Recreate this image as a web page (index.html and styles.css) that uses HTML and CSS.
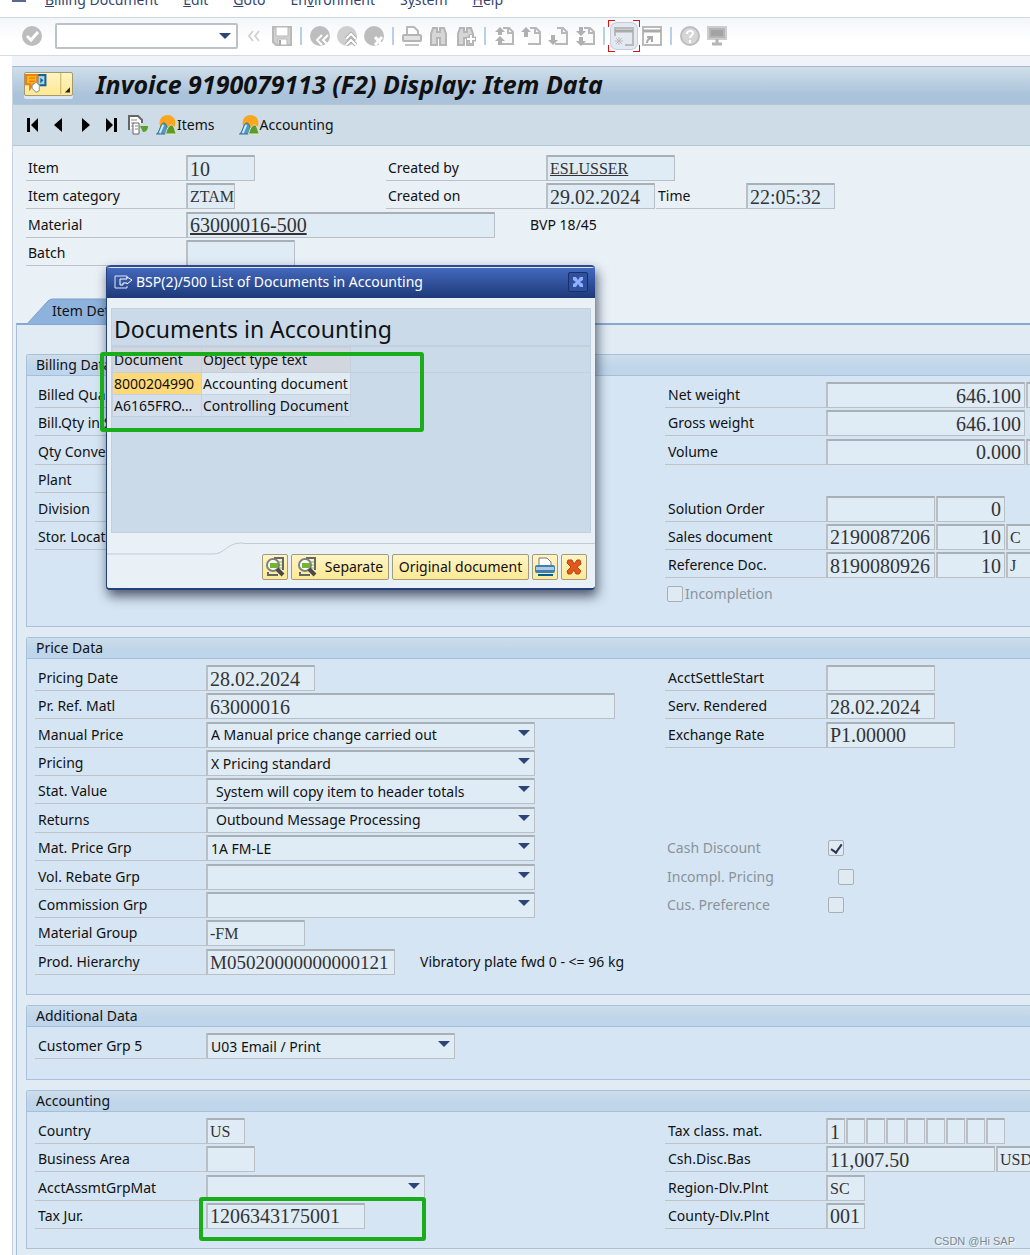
FILE: index.html
```html
<!DOCTYPE html>
<html lang="en">
<head>
    <meta charset="UTF-8">
    <meta name="viewport" content="width=device-width, initial-scale=1.0">
    <title>Invoice 9190079113 (F2) Display: Item Data</title>
    <link rel="stylesheet" href="styles.css">
</head>
<body>
    <!-- Shared icon shapes -->
    <svg class="defs" aria-hidden="true">
        <symbol id="hills" viewBox="0 0 20 20">
            <circle cx="11" cy="8" r="8" fill="#fba61c"/>
            <path d="M0 19c3-1 4-11 7-11s2 2 4 5l-2 6z" fill="#4d9bc4" stroke="#3c6f94"/>
            <path d="M3 18c2-2 2-6 4-8" stroke="#cfe9f5" stroke-width="2" fill="none"/>
            <path d="M9 19c1-4 3-9 6-9s3 6 5 9z" fill="#5d9a2c" stroke="#e8e8c0"/>
        </symbol>
        <symbol id="binoculars" viewBox="0 0 20 20">
            <path d="M2 19V8l2-6h4v4h3V2h4l2 6v11h-6v-7H8v7z" fill="#d6d6d6" stroke="#b5b5b5" stroke-width="2"/>
        </symbol>
        <symbol id="page" viewBox="0 0 20 20">
            <path d="M9 2h6l4 4v12H7" fill="#fafafa" stroke="#b8b8b8" stroke-width="2"/>
            <path d="M14 2v5h5" fill="none" stroke="#b8b8b8" stroke-width="2"/>
        </symbol>
        <symbol id="details" viewBox="0 0 20 20">
            <path d="M9 1h9v12M3 15v3h10" fill="none" stroke="#666" stroke-width="2"/>
            <path d="M12 4h5v9h-5z" fill="#fbfbef"/>
            <path d="M14 5h3M14 8h3M14 11h3" stroke="#7bb545"/>
            <circle cx="8" cy="8" r="6" fill="#fff" stroke="#808080" stroke-width="2"/>
            <path d="M5 6h8v5H5z" fill="#72b82c"/>
            <path d="M12 12l6 6" stroke="#4a4a4a" stroke-width="4"/>
        </symbol>
    </svg>

    <nav class="menu-bar">
        <span class="menu-icon"></span>
        <a href="#"><u>B</u>illing Document</a>
        <a href="#"><u>E</u>dit</a>
        <a href="#"><u>G</u>oto</a>
        <a href="#">En<u>v</u>ironment</a>
        <a href="#">S<u>y</u>stem</a>
        <a href="#"><u>H</u>elp</a>
    </nav>

    <div class="toolbar">
        <button class="tool" aria-label="Enter"><svg viewBox="0 0 20 20"><circle cx="10" cy="10" r="10" fill="#bdbdbd"/><path d="M5 10l4 4 7-8" fill="none" stroke="#fff" stroke-width="3"/></svg></button>
        <div class="command">
            <select aria-label="Command"><option></option></select>
        </div>
        <button class="tool collapse" aria-label="Hide command field"><svg viewBox="0 0 13 20"><path d="M6 5l-4 5 4 5M12 5l-4 5 4 5" fill="none" stroke="#d2d2d2" stroke-width="2"/></svg></button>
        <button class="tool save" aria-label="Save"><svg viewBox="0 0 20 20"><path d="M1 1h18v18H4l-3-3z" fill="#d0d0d0" stroke="#b9b9b9" stroke-width="2"/><path d="M4 1h12v9H4zM6 13h9v6H6z" fill="#fff" stroke="#b9b9b9"/><path d="M8 14v5" stroke="#aaa" stroke-width="2"/></svg></button>
        <span class="divider"></span>
        <button class="tool" aria-label="Back"><svg viewBox="0 0 20 20"><circle cx="10" cy="10" r="10" fill="#bdbdbd"/><path d="M12 9l-5 5 5 5M18 9l-5 5 5 5" fill="none" stroke="#fff" stroke-width="2"/></svg></button>
        <button class="tool" aria-label="Exit"><svg viewBox="0 0 20 20"><circle cx="10" cy="10" r="10" fill="#cfcfcf"/><path d="M9 13l5-5 5 5M9 19l5-5 5 5" fill="none" stroke="#aaa" stroke-width="4"/><path d="M9 13l5-5 5 5M9 19l5-5 5 5" fill="none" stroke="#fff" stroke-width="2"/></svg></button>
        <button class="tool" aria-label="Cancel"><svg viewBox="0 0 20 20"><circle cx="10" cy="10" r="10" fill="#bdbdbd"/><path d="M11 11l7 8M18 11l-7 8" stroke="#fff" stroke-width="3"/></svg></button>
        <span class="divider"></span>
        <button class="tool" aria-label="Print"><svg viewBox="0 0 20 20"><path d="M5 9V1h7l4 4v4" fill="#fff" stroke="#b9b9b9" stroke-width="2"/><rect x="1" y="9" width="18" height="6" rx="1" fill="#e2e2e2" stroke="#b5b5b5" stroke-width="2"/><path d="M3 19h14" stroke="#c2c2c2" stroke-width="2"/></svg></button>
        <button class="tool" aria-label="Find"><svg><use href="#binoculars"/></svg></button>
        <button class="tool" aria-label="Find next"><svg viewBox="0 0 20 20"><use href="#binoculars"/><path d="M15 8v10M10 13h10" stroke="#b5b5b5" stroke-width="5"/><path d="M15 9v8M11 13h8" stroke="#fff" stroke-width="2"/></svg></button>
        <span class="divider"></span>
        <button class="tool" aria-label="First page"><svg viewBox="0 0 20 20"><use href="#page"/><path d="M1 6l5-5 5 5H8v3H4V6zM1 15l5-5 5 5H8v4H4v-4z" fill="#b0b0b0"/></svg></button>
        <button class="tool" aria-label="Previous page"><svg viewBox="0 0 20 20"><use href="#page"/><path d="M0 6l5-5 5 5H7v5H3V6z" fill="#b0b0b0"/></svg></button>
        <button class="tool" aria-label="Next page"><svg viewBox="0 0 20 20"><use href="#page"/><path d="M0 14l5 5 5-5H7V9H3v5z" fill="#b0b0b0"/></svg></button>
        <button class="tool" aria-label="Last page"><svg viewBox="0 0 20 20"><use href="#page"/><path d="M1 5l5 5 5-5H8V1H4v4zM1 15l5 5 5-5H8v-4H4v4z" fill="#b0b0b0"/></svg></button>
        <span class="divider"></span>
        <button class="tool marked" aria-label="New session"><svg viewBox="0 0 20 20"><path d="M1 10V2h18v17H11" fill="none" stroke="#bababa" stroke-width="2"/><path d="M1 5h18" stroke="#aaa" stroke-width="3"/><path d="M5 11v8M1 15h8M2 12l6 6M8 12l-6 6" stroke="#bbb"/></svg></button>
        <button class="tool" aria-label="Shortcut"><svg viewBox="0 0 20 20"><rect x="1" y="1" width="18" height="18" fill="#fff" stroke="#bababa" stroke-width="2"/><path d="M1 5h18" stroke="#aaa" stroke-width="3"/><path d="M5 17c0-3 1-4 4-5M5 11h5v5" fill="none" stroke="#aaa" stroke-width="2"/></svg></button>
        <span class="divider"></span>
        <button class="tool" aria-label="Help"><svg viewBox="0 0 20 20"><circle cx="10" cy="10" r="9" fill="#d6d6d6" stroke="#bdbdbd" stroke-width="2"/><path d="M7 8c0-4 6-4 6-1 0 2-3 3-3 5M10 14v3" fill="none" stroke="#fff" stroke-width="2"/></svg></button>
        <button class="tool" aria-label="Layout"><svg viewBox="0 0 20 20"><rect x="1" y="1" width="18" height="12" fill="#b5b5b5" stroke="#cdcdcd" stroke-width="2"/><path d="M4 4h12v6H4z" fill="#a3a3a3"/><path d="M10 13v4M5 18h10" stroke="#b5b5b5" stroke-width="3"/></svg></button>
    </div>

    <main class="window">
        <header class="title-bar">
            <button class="services" aria-label="Services for object">
                <svg viewBox="0 0 46 21">
                    <rect x="12" y="2" width="8" height="10" fill="#a8d3ea" stroke="#156394" stroke-width="2"/>
                    <path d="M15 5l3 2-3 3z" fill="#156394"/>
                    <path d="M1 2h11v9H8l-3 4v-4H1z" fill="#fdb913" stroke="#ea7f1b" stroke-width="2"/>
                    <path d="M4 5h6M4 8h6" stroke="#e8641b"/>
                    <path d="M7 12l4-3 3 3v5l-3 2-4-4z" fill="#fff" stroke="#999"/>
                    <path d="M35 0v21" stroke="#c2b36e"/>
                    <path d="M44 14v5h-5z" fill="#222"/>
                </svg>
            </button>
            <h1>Invoice 9190079113 (F2) Display: Item Data</h1>
        </header>

        <div class="app-bar">
            <button aria-label="First item"><svg width="12" height="16" viewBox="0 0 12 16"><path d="M0 1h3v14H0zM11 1v14L4 8z"/></svg></button>
            <button class="prev" aria-label="Previous item"><svg width="8" height="16" viewBox="0 0 8 16"><path d="M8 1v14L0 8z"/></svg></button>
            <button class="next" aria-label="Next item"><svg width="8" height="16" viewBox="0 0 8 16"><path d="M0 1v14l8-7z"/></svg></button>
            <button class="last" aria-label="Last item"><svg width="12" height="16" viewBox="0 0 12 16"><path d="M9 1h3v14H9zM1 1v14l7-7z"/></svg></button>
            <button class="copy" aria-label="Display document"><svg width="20" height="20" viewBox="0 0 20 20"><path d="M1 15V1h9l4 4v3" fill="#fff" stroke="#666" stroke-width="2"/><path d="M3 5h6M3 8h3M3 11h2" stroke="#888"/><path d="M12 11h8c0 5-3 6-5 6z" fill="#55a32b"/><path d="M5 8h6v11H5z" fill="#fff" stroke="#666"/><path d="M7 11h3M7 14h3" stroke="#888"/></svg></button>
            <button class="with-text"><svg width="21" height="20" preserveAspectRatio="none"><use href="#hills"/></svg>Items</button>
            <button class="with-text accounting"><svg width="21" height="20"><use href="#hills"/></svg>Accounting</button>
        </div>

        <section class="item-head">
            <div class="row">
                <label for="item">Item</label>
                <div class="cell"><input class="w69" id="item" value="10" readonly></div>
                <label for="createdBy">Created by</label>
                <input class="w129 caps link" id="createdBy" value="ESLUSSER" readonly>
            </div>
            <div class="row">
                <label for="category">Item category</label>
                <div class="cell"><input class="w49 caps" id="category" value="ZTAM" readonly></div>
                <label for="createdOn">Created on</label>
                <input class="w109" id="createdOn" value="29.02.2024" readonly>
                <label class="time" for="time">Time</label>
                <input class="w89" id="time" value="22:05:32" readonly>
            </div>
            <div class="row">
                <label for="material">Material</label>
                <input class="w309 link" id="material" value="63000016-500" readonly>
                <span class="note">BVP 18/45</span>
            </div>
            <div class="row">
                <label for="batch">Batch</label>
                <input class="w109" id="batch" readonly>
            </div>
        </section>

        <div class="tabs">
            <button class="tab"><svg viewBox="0 0 120 27" width="120" height="27"><path d="M0 26L21 3q2-2 5-2h94v26H0z" fill="#8db2dc" stroke="#7b9fcb"/></svg><span>Item Detail</span></button>
        </div>

        <div class="panel">
            <section class="group">
                <h2>Billing Data</h2>
                <div class="columns">
                    <div class="rows rows-8">
                        <div class="row"><label for="billedQty">Billed Quantity</label><input class="w189" id="billedQty" readonly></div>
                        <div class="row"><label for="billQty">Bill.Qty in SKU</label><input class="w189" id="billQty" readonly></div>
                        <div class="row"><label for="qtyConv">Qty Conversion</label><input class="w189" id="qtyConv" readonly></div>
                        <div class="row"><label for="plant">Plant</label><input class="w49" id="plant" readonly></div>
                        <div class="row"><label for="division">Division</label><input class="w49" id="division" readonly></div>
                        <div class="row"><label for="storLoc">Stor. Location</label><input class="w49" id="storLoc" readonly></div>
                    </div>
                    <div class="rows rows-8 side">
                        <div class="row"><label for="net">Net weight</label><input class="w199 right" id="net" value="646.100" readonly><input class="w49" aria-label="Net weight unit" readonly></div>
                        <div class="row"><label for="gross">Gross weight</label><input class="w199 right" id="gross" value="646.100" readonly></div>
                        <div class="row"><label for="volume">Volume</label><input class="w199 right" id="volume" value="0.000" readonly><input class="w49" aria-label="Volume unit" readonly></div>
                        <div class="row"></div>
                        <div class="row"><label for="solution">Solution Order</label><input class="w109" id="solution" readonly><input class="w69 right" aria-label="Solution item" value="0" readonly></div>
                        <div class="row"><label for="sales">Sales document</label><input class="w109" id="sales" value="2190087206" readonly><input class="w69 right" aria-label="Sales item" value="10" readonly><input class="w49 caps" aria-label="Sales category" value="C" readonly></div>
                        <div class="row"><label for="refDoc">Reference Doc.</label><input class="w109" id="refDoc" value="8190080926" readonly><input class="w69 right" aria-label="Reference item" value="10" readonly><input class="w49 caps" aria-label="Reference category" value="J" readonly></div>
                        <div class="row check-row"><input type="checkbox" id="incompletion" disabled><label for="incompletion">Incompletion</label></div>
                    </div>
                </div>
            </section>

            <section class="group">
                <h2>Price Data</h2>
                <div class="columns">
                    <div class="rows rows-11">
                        <div class="row"><label for="priceDate">Pricing Date</label><input class="w109" id="priceDate" value="28.02.2024" readonly></div>
                        <div class="row"><label for="refMatl">Pr. Ref. Matl</label><input class="w409" id="refMatl" value="63000016" readonly></div>
                        <div class="row"><label for="manual">Manual Price</label><div class="select w329"><select id="manual"><option>A Manual price change carried out</option></select></div></div>
                        <div class="row"><label for="pricing">Pricing</label><div class="select w329"><select id="pricing"><option>X Pricing standard</option></select></div></div>
                        <div class="row"><label for="stat">Stat. Value</label><div class="select w329 blank-key"><select id="stat"><option>System will copy item to header totals</option></select></div></div>
                        <div class="row"><label for="returns">Returns</label><div class="select w329 blank-key"><select id="returns"><option>Outbound Message Processing</option></select></div></div>
                        <div class="row"><label for="matGrp">Mat. Price Grp</label><div class="select w329"><select id="matGrp"><option>1A FM-LE</option></select></div></div>
                        <div class="row"><label for="rebate">Vol. Rebate Grp</label><div class="select w329"><select id="rebate"><option></option></select></div></div>
                        <div class="row"><label for="commission">Commission Grp</label><div class="select w329"><select id="commission"><option></option></select></div></div>
                        <div class="row"><label for="matGroup">Material Group</label><input class="w99 caps" id="matGroup" value="-FM" readonly></div>
                        <div class="row"><label for="hierarchy">Prod. Hierarchy</label><input class="w189 long" id="hierarchy" value="M05020000000000121" readonly><span class="hint">Vibratory plate fwd 0 - &lt;= 96 kg</span></div>
                    </div>
                    <div class="rows rows-11 side">
                        <div class="row"><label for="settle">AcctSettleStart</label><input class="w109" id="settle" readonly></div>
                        <div class="row"><label for="rendered">Serv. Rendered</label><input class="w109" id="rendered" value="28.02.2024" readonly></div>
                        <div class="row"><label for="rate">Exchange Rate</label><input class="w129" id="rate" value="P1.00000" readonly></div>
                        <div class="row"></div>
                        <div class="row"></div>
                        <div class="row"></div>
                        <div class="row flag-row"><label for="cash">Cash Discount</label><input type="checkbox" id="cash" checked disabled></div>
                        <div class="row flag-row indent"><label for="incompl">Incompl. Pricing</label><input type="checkbox" id="incompl" disabled></div>
                        <div class="row flag-row"><label for="cus">Cus. Preference</label><input type="checkbox" id="cus" disabled></div>
                    </div>
                </div>
            </section>

            <section class="group">
                <h2>Additional Data</h2>
                <div class="rows">
                    <div class="row"><label for="grp5">Customer Grp 5</label><div class="select w249"><select id="grp5"><option>U03 Email / Print</option></select></div></div>
                </div>
            </section>

            <section class="group">
                <h2>Accounting</h2>
                <div class="columns">
                    <div class="rows rows-4">
                        <div class="row"><label for="country">Country</label><input class="w39 caps" id="country" value="US" readonly></div>
                        <div class="row"><label for="area">Business Area</label><input class="w49" id="area" readonly></div>
                        <div class="row"><label for="assmt">AcctAssmtGrpMat</label><div class="select w219"><select id="assmt"><option></option></select></div></div>
                        <div class="row"><label for="taxJur">Tax Jur.</label><div class="marked-field"><input class="w159" id="taxJur" value="1206343175001" readonly><span class="marker marker-field"></span></div></div>
                    </div>
                    <div class="rows rows-4 side">
                        <div class="row"><label for="tax1">Tax class. mat.</label><input class="w19" id="tax1" value="1" readonly><input class="w19" aria-label="Tax class 2" readonly><input class="w19" aria-label="Tax class 3" readonly><input class="w19" aria-label="Tax class 4" readonly><input class="w19" aria-label="Tax class 5" readonly><input class="w19" aria-label="Tax class 6" readonly><input class="w19" aria-label="Tax class 7" readonly><input class="w19" aria-label="Tax class 8" readonly><input class="w19" aria-label="Tax class 9" readonly></div>
                        <div class="row"><label for="discBas">Csh.Disc.Bas</label><input class="w169" id="discBas" value="11,007.50" readonly><input class="w49 caps" aria-label="Currency" value="USD" readonly></div>
                        <div class="row"><label for="region">Region-Dlv.Plnt</label><input class="w39 caps" id="region" value="SC" readonly></div>
                        <div class="row"><label for="county">County-Dlv.Plnt</label><input class="w39" id="county" value="001" readonly></div>
                    </div>
                </div>
            </section>
        </div>
    </main>

    <!-- Accounting documents popup -->
    <div class="dialog" role="dialog" aria-labelledby="dialogTitle">
        <div class="dialog-title">
            <svg width="19" height="14" viewBox="0 0 19 14"><path d="M13 3V1H1v12h12v-2" fill="none" stroke="#dfe7f7"/><path d="M6 4h7V2l5 3-5 4V8H9v2H6z" fill="#3557a8" stroke="#fff"/></svg>
            <span id="dialogTitle">BSP(2)/500 List of Documents in Accounting</span>
            <button class="close" aria-label="Close"><svg width="12" height="12" viewBox="0 0 12 12"><path d="M1 1h3l2 3 2-3h3v3L8 6l3 2v3H8L6 8l-2 3H1V8l3-2-3-2z" fill="#8fb0ff"/></svg></button>
        </div>
        <div class="dialog-body">
            <h2>Documents in Accounting</h2>
            <table>
                <thead>
                    <tr><th>Document</th><th>Object type text</th><td class="rest"></td></tr>
                </thead>
                <tbody>
                    <tr><td class="selected">8000204990</td><td>Accounting document</td></tr>
                    <tr class="odd"><td>A6165FRO…</td><td>Controlling Document</td></tr>
                </tbody>
            </table>
        </div>
        <div class="dialog-foot">
            <svg class="edge" width="136" height="14" viewBox="0 0 136 14"><path d="M0 11h106c12 0 14-11 28-11h2" fill="none" stroke="#c2cad8"/></svg>
            <span class="edge-line"></span>
            <div class="dialog-buttons">
                <button aria-label="Choose"><svg width="20" height="20"><use href="#details"/></svg></button>
                <button class="separate"><svg width="20" height="20"><use href="#details"/></svg>Separate</button>
                <button class="original">Original document</button>
                <button aria-label="Print list"><svg width="20" height="20" viewBox="0 0 20 20"><path d="M4 9V1h8l4 4v4" fill="#fff" stroke="#777"/><rect x="0" y="8" width="20" height="8" rx="2" fill="#437fae"/><path d="M1 10h18v3H1z" fill="#a9cbe4"/><path d="M3 18h15" stroke="#005f96" stroke-width="2"/></svg></button>
                <button aria-label="Cancel list"><svg width="16" height="16" viewBox="0 0 16 16"><path d="M2 1h4l2 4 3-4h3l1 4-4 3 4 4-2 3h-3l-2-4-3 4H2l-1-3 4-4-4-4z" fill="#e2571c" stroke="#b94312"/></svg></button>
            </div>
        </div>
        <span class="marker marker-table"></span>
    </div>

    <div class="watermark">CSDN @Hi SAP</div>
</body>
</html>
```

FILE: styles.css
```css
/* Global styles */
* {
    box-sizing: border-box;
}

body {
    position: relative;
    margin: 0;
    min-height: 100vh;
    font-family: "Noto Sans", sans-serif;
    font-size: 14px;
    line-height: 20px;
    color: #111;
    background-color: #fff;
    overflow-x: hidden;
}

button,
select {
    font: inherit;
    color: inherit;
}

button {
    padding: 0;
    border: none;
    background: none;
}

svg {
    display: block;
}

.defs {
    position: absolute;
    width: 0;
    height: 0;
}

/* Menu bar */
.menu-bar {
    display: flex;
    align-items: flex-end;
    gap: 25px;
    height: 18px;
    padding: 0 12px 7px;
    border-bottom: 1px solid #d3d8dc;
    overflow: hidden;
}

.menu-bar a {
    color: #33446f;
    text-decoration: none;
}

.menu-icon {
    width: 14px;
    height: 12px;
    margin: 0 -6px 8px 0;
    border: 2px solid #596a8e;
}

/* System toolbar */
.toolbar {
    display: flex;
    align-items: center;
    gap: 7px;
    height: 38px;
    padding: 0 22px 2px;
    border-bottom: 1px solid #d8dce0;
    background: linear-gradient(#f3f6f9, #fff 60%);
}

.tool {
    position: relative;
    flex: none;
    width: 20px;
    height: 20px;
}

.tool svg {
    width: 100%;
    height: 20px;
}

.tool.collapse {
    width: 13px;
    margin-left: 2px;
}

.tool.save {
    margin-left: 5px;
}

.command {
    position: relative;
    width: 183px;
    margin-left: 6px;
}

.command select {
    display: block;
    width: 100%;
    height: 26px;
    appearance: none;
    border: 2px solid #bcc3c7;
    border-radius: 2px;
    background-color: #fff;
}

.command::after,
.select::after {
    content: "";
    position: absolute;
    top: 10px;
    right: 7px;
    border: 6px solid transparent;
    border-top-color: #2c4478;
    border-bottom: none;
    pointer-events: none;
}

.divider {
    width: 2px;
    height: 18px;
    margin: 0 1px;
    background-color: #b7d0e8;
}

.marked {
    margin: 0 1px;
    border-radius: 3px;
    background-color: #e4e9f1;
    box-shadow: 0 0 0 3px #e4e9f1, 0 0 0 4px #c3cddd;
}

/* Red corner brackets */
.marked::before {
    content: "";
    position: absolute;
    inset: -6px;
    background:
        linear-gradient(#e01010, #e01010) 0 0 / 7px 1px,
        linear-gradient(#e01010, #e01010) 0 0 / 1px 7px,
        linear-gradient(#e01010, #e01010) 100% 0 / 7px 1px,
        linear-gradient(#e01010, #e01010) 100% 0 / 1px 7px,
        linear-gradient(#e01010, #e01010) 0 100% / 7px 1px,
        linear-gradient(#e01010, #e01010) 0 100% / 1px 7px,
        linear-gradient(#e01010, #e01010) 100% 100% / 7px 1px,
        linear-gradient(#e01010, #e01010) 100% 100% / 1px 7px;
    background-repeat: no-repeat;
}

/* Main window */
.window {
    margin: 10px 0 0 12px;
    border-top: 1px solid #a5b9cd;
    border-left: 1px solid #c9d4e2;
    background-color: #e9f0f6;
    box-shadow: 0 -10px #f0f4fa;
    overflow: hidden;
}

.title-bar {
    display: flex;
    align-items: center;
    gap: 23px;
    height: 38px;
    padding: 0 0 4px 11px;
    border-bottom: 1px solid #b6c6d3;
    background: linear-gradient(#cfdfe9, #aac2da 75%);
}

.title-bar h1 {
    margin: 0;
    font-size: 25px;
    line-height: 30px;
    font-style: italic;
    white-space: nowrap;
}

.services {
    width: 49px;
    height: 24px;
    border: 1px solid #a39a73;
    border-radius: 2px;
    background: linear-gradient(#fff3c2, #fde992);
    box-shadow: 0 3px #dbe8f3;
}

.app-bar {
    display: flex;
    align-items: center;
    height: 41px;
    padding: 0 0 1px 14px;
    border-bottom: 1px solid #b3c6d6;
    background-color: #cddce6;
}

.app-bar .prev {
    margin-left: 15px;
}

.app-bar .next {
    margin-left: 20px;
}

.app-bar .last {
    margin-left: 15px;
}

.app-bar .copy {
    margin-left: 11px;
}

.with-text {
    display: flex;
    align-items: center;
    margin-left: 8px;
}

.with-text.accounting {
    margin-left: 24px;
}

/* Field rows */
.row {
    display: flex;
    align-items: flex-start;
    white-space: nowrap;
}

.row > * {
    flex: none;
}

.row label {
    width: 171px;
    height: 26px;
    padding-left: 3px;
    border-bottom: 1px solid #bfc3c7;
    line-height: 26px;
}

.side .row label {
    width: 161px;
}

.row input:not([type="checkbox"]),
.select select {
    display: block;
    height: 26px;
    margin: 0 1px 0 0;
    border: 1px solid #b9bfc4;
    border-top: 2px solid #a9b0b5;
    border-left-width: 2px;
    border-radius: 1px;
    background-color: #dfebf5;
    outline: none;
}

.row input:not([type="checkbox"]) {
    padding: 1px 3px 0 2px;
    font-family: "Liberation Serif", serif;
    font-size: 20px;
    color: #333;
}

.row input.caps {
    padding-right: 0;
    font-size: 16px;
}

.row input.long {
    font-size: 19px;
}

.row input.link {
    text-decoration: underline;
}

.row input.right {
    text-align: right;
}

.select {
    position: relative;
}

.select select {
    width: 100%;
    padding: 0 24px 0 3px;
    appearance: none;
}

.select.blank-key select {
    padding-left: 8px;
}

.select::after {
    top: 8px;
    right: 5px;
}

/* Field widths */
.w19 { width: 19px; }
.w39 { width: 39px; }
.w49 { width: 49px; }
.w69 { width: 69px; }
.w89 { width: 89px; }
.w99 { width: 99px; }
.w109 { width: 109px; }
.w129 { width: 129px; }
.w159 { width: 159px; }
.w169 { width: 169px; }
.w189 { width: 189px; }
.w199 { width: 199px; }
.w219 { width: 219px; }
.w249 { width: 249px; }
.w309 { width: 309px; }
.w329 { width: 329px; }
.w409 { width: 409px; }

/* Item header */
.item-head {
    display: grid;
    grid-auto-rows: 1fr;
    min-height: 113px;
    margin: 9px 0 0 13px;
}

.item-head .row label {
    width: 160px;
    padding-left: 2px;
}

.item-head .row label.time {
    width: 90px;
}

.item-head .cell {
    width: 200px;
}

.item-head .note {
    margin-left: 34px;
    line-height: 26px;
}

/* Tab strip */
.tabs {
    margin-top: 30px;
    padding-left: 14px;
}

.tab {
    display: grid;
    height: 25px;
}

.tab svg,
.tab span {
    grid-area: 1 / 1;
}

.tab span {
    padding: 3px 0 0 25px;
    text-align: left;
}

.panel {
    margin-left: 3px;
    padding: 29px 0 6px 9px;
    border-top: 2px solid #85a9d3;
    border-left: 1px solid #a6bfdc;
    background-color: #e0ebf4;
}

/* Group boxes */
.group {
    margin-bottom: 10px;
    padding-bottom: 17px;
    border: 1px solid #a8c0dc;
    border-right: none;
    border-radius: 3px 0 0 0;
    background-color: #d5e5f3;
}

.group:last-child {
    margin-bottom: 0;
}

.group h2 {
    height: 21px;
    margin: 0 0 6px;
    padding-left: 9px;
    border-bottom: 1px solid #a5bedb;
    background: linear-gradient(#cdddea, #bfd5ea 60%);
    font-size: 14px;
    line-height: 20px;
    font-weight: normal;
}

.columns {
    display: grid;
    grid-template-columns: 630px 1fr;
}

.rows {
    display: grid;
    grid-auto-rows: 1fr;
    min-height: 29px;
    padding-left: 8px;
}

.columns .rows {
    min-width: 0;
}

.rows-4 {
    min-height: 113px;
}

.rows-8 {
    grid-template-rows: repeat(8, 1fr);
    min-height: 227px;
}

.rows-11 {
    grid-template-rows: repeat(11, 1fr);
    min-height: 312px;
}

.hint {
    margin-left: 24px;
    line-height: 26px;
}

/* Check boxes */
.row input[type="checkbox"] {
    width: 16px;
    height: 16px;
    margin: 5px 2px;
    appearance: none;
    border: 1px solid #a9afb5;
    border-radius: 2px;
    background-color: #dfeaf3;
}

.row input[type="checkbox"]:checked::before {
    content: "";
    display: block;
    width: 5px;
    height: 9px;
    margin: 1px 0 0 4px;
    border: solid #2c3350;
    border-width: 0 2px 2px 0;
    transform: rotate(35deg);
}

.row.check-row label,
.row.flag-row label {
    border-bottom: none;
    color: #8a939c;
}

.row.check-row label {
    padding-left: 0;
}

.row.flag-row label {
    padding-left: 2px;
}

.side .row.indent label {
    width: 171px;
}

/* Popup */
.dialog {
    position: absolute;
    top: 265px;
    left: 106px;
    width: 489px;
    border: 1px solid #23407f;
    border-width: 0 0 2px 1px;
    border-radius: 4px;
    background-color: #e9f0f6;
    box-shadow: 2px 6px 12px rgba(30, 40, 60, 0.75);
}

.dialog-title {
    display: flex;
    align-items: center;
    gap: 3px;
    height: 33px;
    padding: 0 7px 2px;
    border-top: 2px solid #2c4a8c;
    border-radius: 4px 4px 0 0;
    background: linear-gradient(#dbe6fb 1px, #4468bd 1px, #1d3978);
    color: #fff;
}

.close {
    display: flex;
    align-items: center;
    justify-content: center;
    width: 20px;
    height: 20px;
    margin-left: auto;
    border: 1px solid #1a2f66;
    border-radius: 2px;
    background-color: #2f509e;
}

.dialog-body {
    height: 225px;
    margin: 10px 4px;
    border: 1px solid #c3d0dd;
    background-color: #cbdae8;
}

.dialog-body h2 {
    height: 38px;
    margin: 0;
    padding: 3px 2px 0;
    border-bottom: 2px solid #c2cfdc;
    font-size: 23px;
    line-height: 34px;
    font-weight: normal;
}

.dialog table {
    width: 100%;
    table-layout: fixed;
    border-collapse: collapse;
}

.dialog th,
.dialog td {
    height: 22px;
    padding: 0 1px;
    border: 1px solid #c5d0df;
    background-color: #e0ebf4;
    font-weight: normal;
    text-align: left;
    line-height: 20px;
    white-space: nowrap;
}

.dialog th {
    height: 25px;
    background-color: #d1d6df;
}

.dialog th:first-child {
    width: 89px;
}

.dialog th:nth-child(2) {
    width: 149px;
}

.dialog .rest {
    border-width: 0 0 1px;
    background: none;
}

.dialog .odd td {
    background-color: #d4dfee;
}

.dialog td.selected {
    background-color: #ffd878;
}

.dialog-foot {
    display: grid;
    grid-template-columns: 136px 1fr;
    height: 45px;
}

.edge {
    grid-area: 1 / 1;
    overflow: visible;
}

.edge-line {
    grid-area: 1 / 2;
    border-top: 1px solid #c2cad8;
}

.dialog-buttons {
    grid-area: 1 / 1 / 2 / 3;
    display: flex;
    justify-content: flex-end;
    gap: 3px;
    padding: 11px 8px 0 0;
}

.dialog-buttons button {
    display: flex;
    align-items: center;
    justify-content: center;
    width: 26px;
    height: 26px;
    border: 1px solid #a09c7e;
    border-radius: 2px;
    background: linear-gradient(#fff4c6, #fde995);
}

.dialog-buttons .separate {
    gap: 8px;
    width: 98px;
}

.dialog-buttons .original {
    width: 137px;
}

/* Green highlight frames */
.marker {
    position: absolute;
    border: 4px solid #1aad1a;
    border-radius: 3px;
    pointer-events: none;
}

.marker-table {
    top: 87px;
    left: -7px;
    width: 324px;
    height: 80px;
}

.marked-field {
    position: relative;
}

.marker-field {
    top: -6px;
    left: -7px;
    width: 227px;
    height: 44px;
}

.watermark {
    position: absolute;
    right: 15px;
    bottom: 6px;
    font-family: "Liberation Sans", sans-serif;
    font-size: 11px;
    line-height: 16px;
    color: #7d8791;
    text-shadow: 1px 1px #f2f6fa;
}
```
